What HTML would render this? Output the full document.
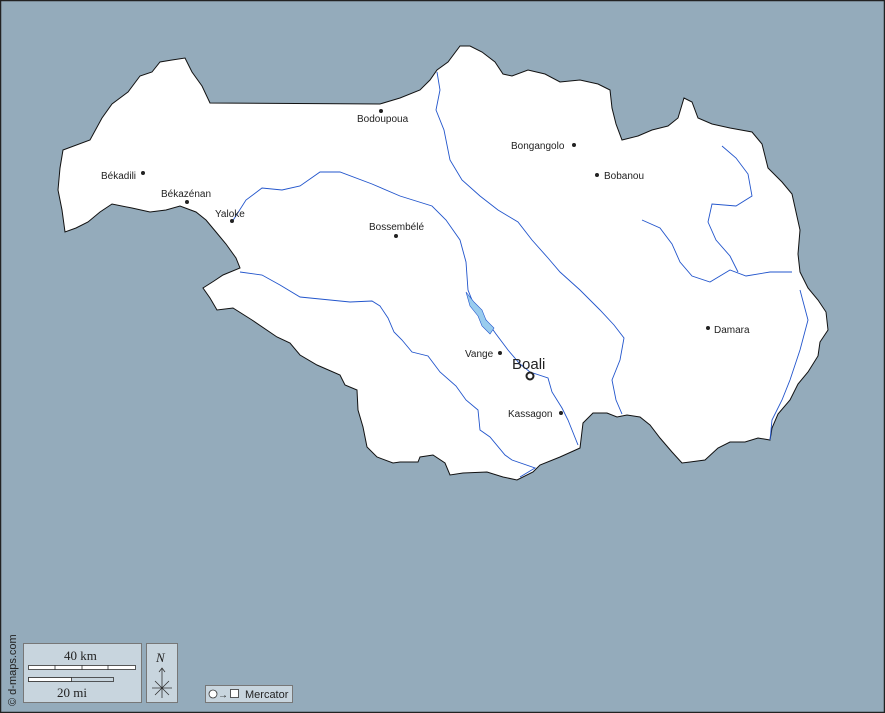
<!DOCTYPE html>
<html><head><meta charset="utf-8"><style>
html,body{margin:0;padding:0;background:#94abbb;}
svg{display:block}
text{font-family:"Liberation Sans",sans-serif;fill:#222}
</style></head><body>
<svg width="885" height="713" viewBox="0 0 885 713" xmlns="http://www.w3.org/2000/svg">
<rect x="0.5" y="0.5" width="884" height="712" fill="#94abbb" stroke="#222" stroke-width="1.5"/>
<path fill="#fff" stroke="#111" stroke-width="1" d="M63,150 L90,140 L102,118 L112,104 L128,92 L140,76 L152,72 L160,62 L172,60 L185,58 L192,72 L202,86 L210,103 L380,104 L400,98 L420,90 L430,80 L437,70 L448,62 L460,46 L470,46 L482,52 L495,62 L503,74 L512,76 L528,70 L545,74 L560,82 L580,80 L598,84 L610,90 L612,108 L616,124 L622,140 L638,136 L652,130 L668,126 L678,118 L684,98 L692,102 L698,118 L712,124 L730,128 L752,132 L762,144 L768,168 L782,182 L792,194 L796,212 L800,230 L798,254 L800,272 L808,288 L818,300 L826,312 L828,330 L820,342 L818,356 L808,372 L798,384 L790,400 L778,414 L772,428 L770,440 L758,438 L745,442 L730,442 L718,448 L705,460 L690,462 L682,463 L672,452 L660,438 L650,425 L640,417 L627,415 L617,417 L607,413 L593,413 L583,423 L580,448 L560,457 L540,465 L533,472 L517,480 L503,477 L487,472 L463,473 L450,475 L445,463 L433,455 L420,457 L418,462 L400,462 L393,463 L377,457 L367,447 L363,427 L358,410 L357,390 L345,385 L340,375 L317,365 L300,355 L290,343 L277,337 L252,320 L233,308 L217,310 L210,298 L203,288 L214,281 L223,275 L240,268 L236,258 L226,244 L216,232 L206,220 L196,212 L180,206 L166,210 L150,212 L132,208 L112,204 L100,212 L88,222 L76,228 L65,232 L62,210 L58,190 L60,168 Z"/>
<g fill="none" stroke="#2255cc" stroke-width="0.9">
<path d="M437,72 L440,90 L436,110 L444,130 L450,160 L462,180 L480,196 L498,210 L518,222 L532,240 L548,258 L560,272 L580,290 L600,310 L614,325 L624,338 L620,360 L612,380 L616,400 L622,414"/>
<path d="M232,222 L246,200 L262,188 L282,190 L300,186 L320,172 L340,172 L372,184 L400,196 L432,206 L446,220 L460,240 L466,262 L468,290 L474,305 L486,320 L496,334 L508,350 L520,364 L530,372 L548,378 L552,392 L562,408 L568,420 L572,430 L578,445"/>
<path d="M240,272 L262,275 L280,285 L300,297 L330,300 L350,302 L372,301 L380,306 L388,318 L394,332 L402,340 L412,352 L428,356 L440,372 L456,386 L466,400 L478,410 L480,430 L490,437 L505,455 L512,460 L535,468 L520,477"/>
<path d="M642,220 L660,228 L672,244 L680,262 L692,276 L710,282 L730,270 L746,276 L770,272 L792,272"/>
<path d="M722,146 L736,158 L748,174 L752,196 L736,206 L712,204 L708,222 L716,240 L730,256 L738,272"/>
<path d="M800,290 L808,320 L800,350 L790,380 L782,400 L772,420 L770,440"/>
</g>
<path d="M466,292 L474,302 L482,310 L486,320 L494,328 L490,334 L482,326 L478,316 L470,306 Z" fill="#99ccee" stroke="#2255cc" stroke-width="0.6"/>
<g font-size="10">
<circle cx="381" cy="111" r="2" fill="#222"/><text x="357" y="122">Bodoupoua</text>
<circle cx="574" cy="145" r="2" fill="#222"/><text x="511" y="149">Bongangolo</text>
<circle cx="597" cy="175" r="2" fill="#222"/><text x="604" y="179">Bobanou</text>
<circle cx="143" cy="173" r="2" fill="#222"/><text x="101" y="179">Békadili</text>
<circle cx="187" cy="202" r="2" fill="#222"/><text x="161" y="197">Békazénan</text>
<circle cx="232" cy="221" r="2" fill="#222"/><text x="215" y="217">Yaloke</text>
<circle cx="396" cy="236" r="2" fill="#222"/><text x="369" y="230">Bossembélé</text>
<circle cx="708" cy="328" r="2" fill="#222"/><text x="714" y="333">Damara</text>
<circle cx="500" cy="353" r="2" fill="#222"/><text x="465" y="357">Vange</text>
<circle cx="561" cy="413" r="2" fill="#222"/><text x="508" y="417">Kassagon</text>
</g>
<text x="512" y="369" font-size="15">Boali</text>
<circle cx="530" cy="376" r="3.5" fill="none" stroke="#222" stroke-width="2"/>
<text transform="translate(16,706) rotate(-90)" font-size="11">© d-maps.com</text>
<rect x="23.5" y="643.5" width="118" height="59" fill="#c8d5de" stroke="#777"/>
<text x="64" y="660" font-size="13" style="font-family:'Liberation Serif',serif">40 km</text>
<rect x="28.5" y="665.5" width="107" height="4" fill="#fff" stroke="#333" stroke-width="0.8"/>
<path d="M55,665 V670 M82,665 V670 M108,665 V670" stroke="#333" stroke-width="0.8"/>
<rect x="28.5" y="677.5" width="85" height="4" fill="#c8d5de" stroke="#333" stroke-width="0.8"/>
<rect x="28.5" y="677.5" width="43" height="4" fill="#fff" stroke="#333" stroke-width="0.8"/>
<text x="57" y="697" font-size="13" style="font-family:'Liberation Serif',serif">20 mi</text>
<rect x="146.5" y="643.5" width="31" height="59" fill="#c8d5de" stroke="#777"/>
<text x="156" y="662" font-size="13" font-style="italic" style="font-family:'Liberation Serif',serif">N</text>
<path d="M162,668 V698 M152,688 H172 M155,681 L169,695 M169,681 L155,695 M159,672 L162,668 L165,672" stroke="#333" stroke-width="0.8" fill="none"/>
<rect x="205.5" y="685.5" width="87" height="17" fill="#c8d5de" stroke="#777"/>
<circle cx="213" cy="694" r="4" fill="#fff" stroke="#333" stroke-width="0.8"/>
<text x="218" y="698" font-size="10">→</text>
<rect x="230.5" y="689.5" width="8" height="8" fill="#fff" stroke="#333" stroke-width="0.8"/>
<text x="245" y="698" font-size="11" fill="#333">Mercator</text>
</svg>
</body></html>
